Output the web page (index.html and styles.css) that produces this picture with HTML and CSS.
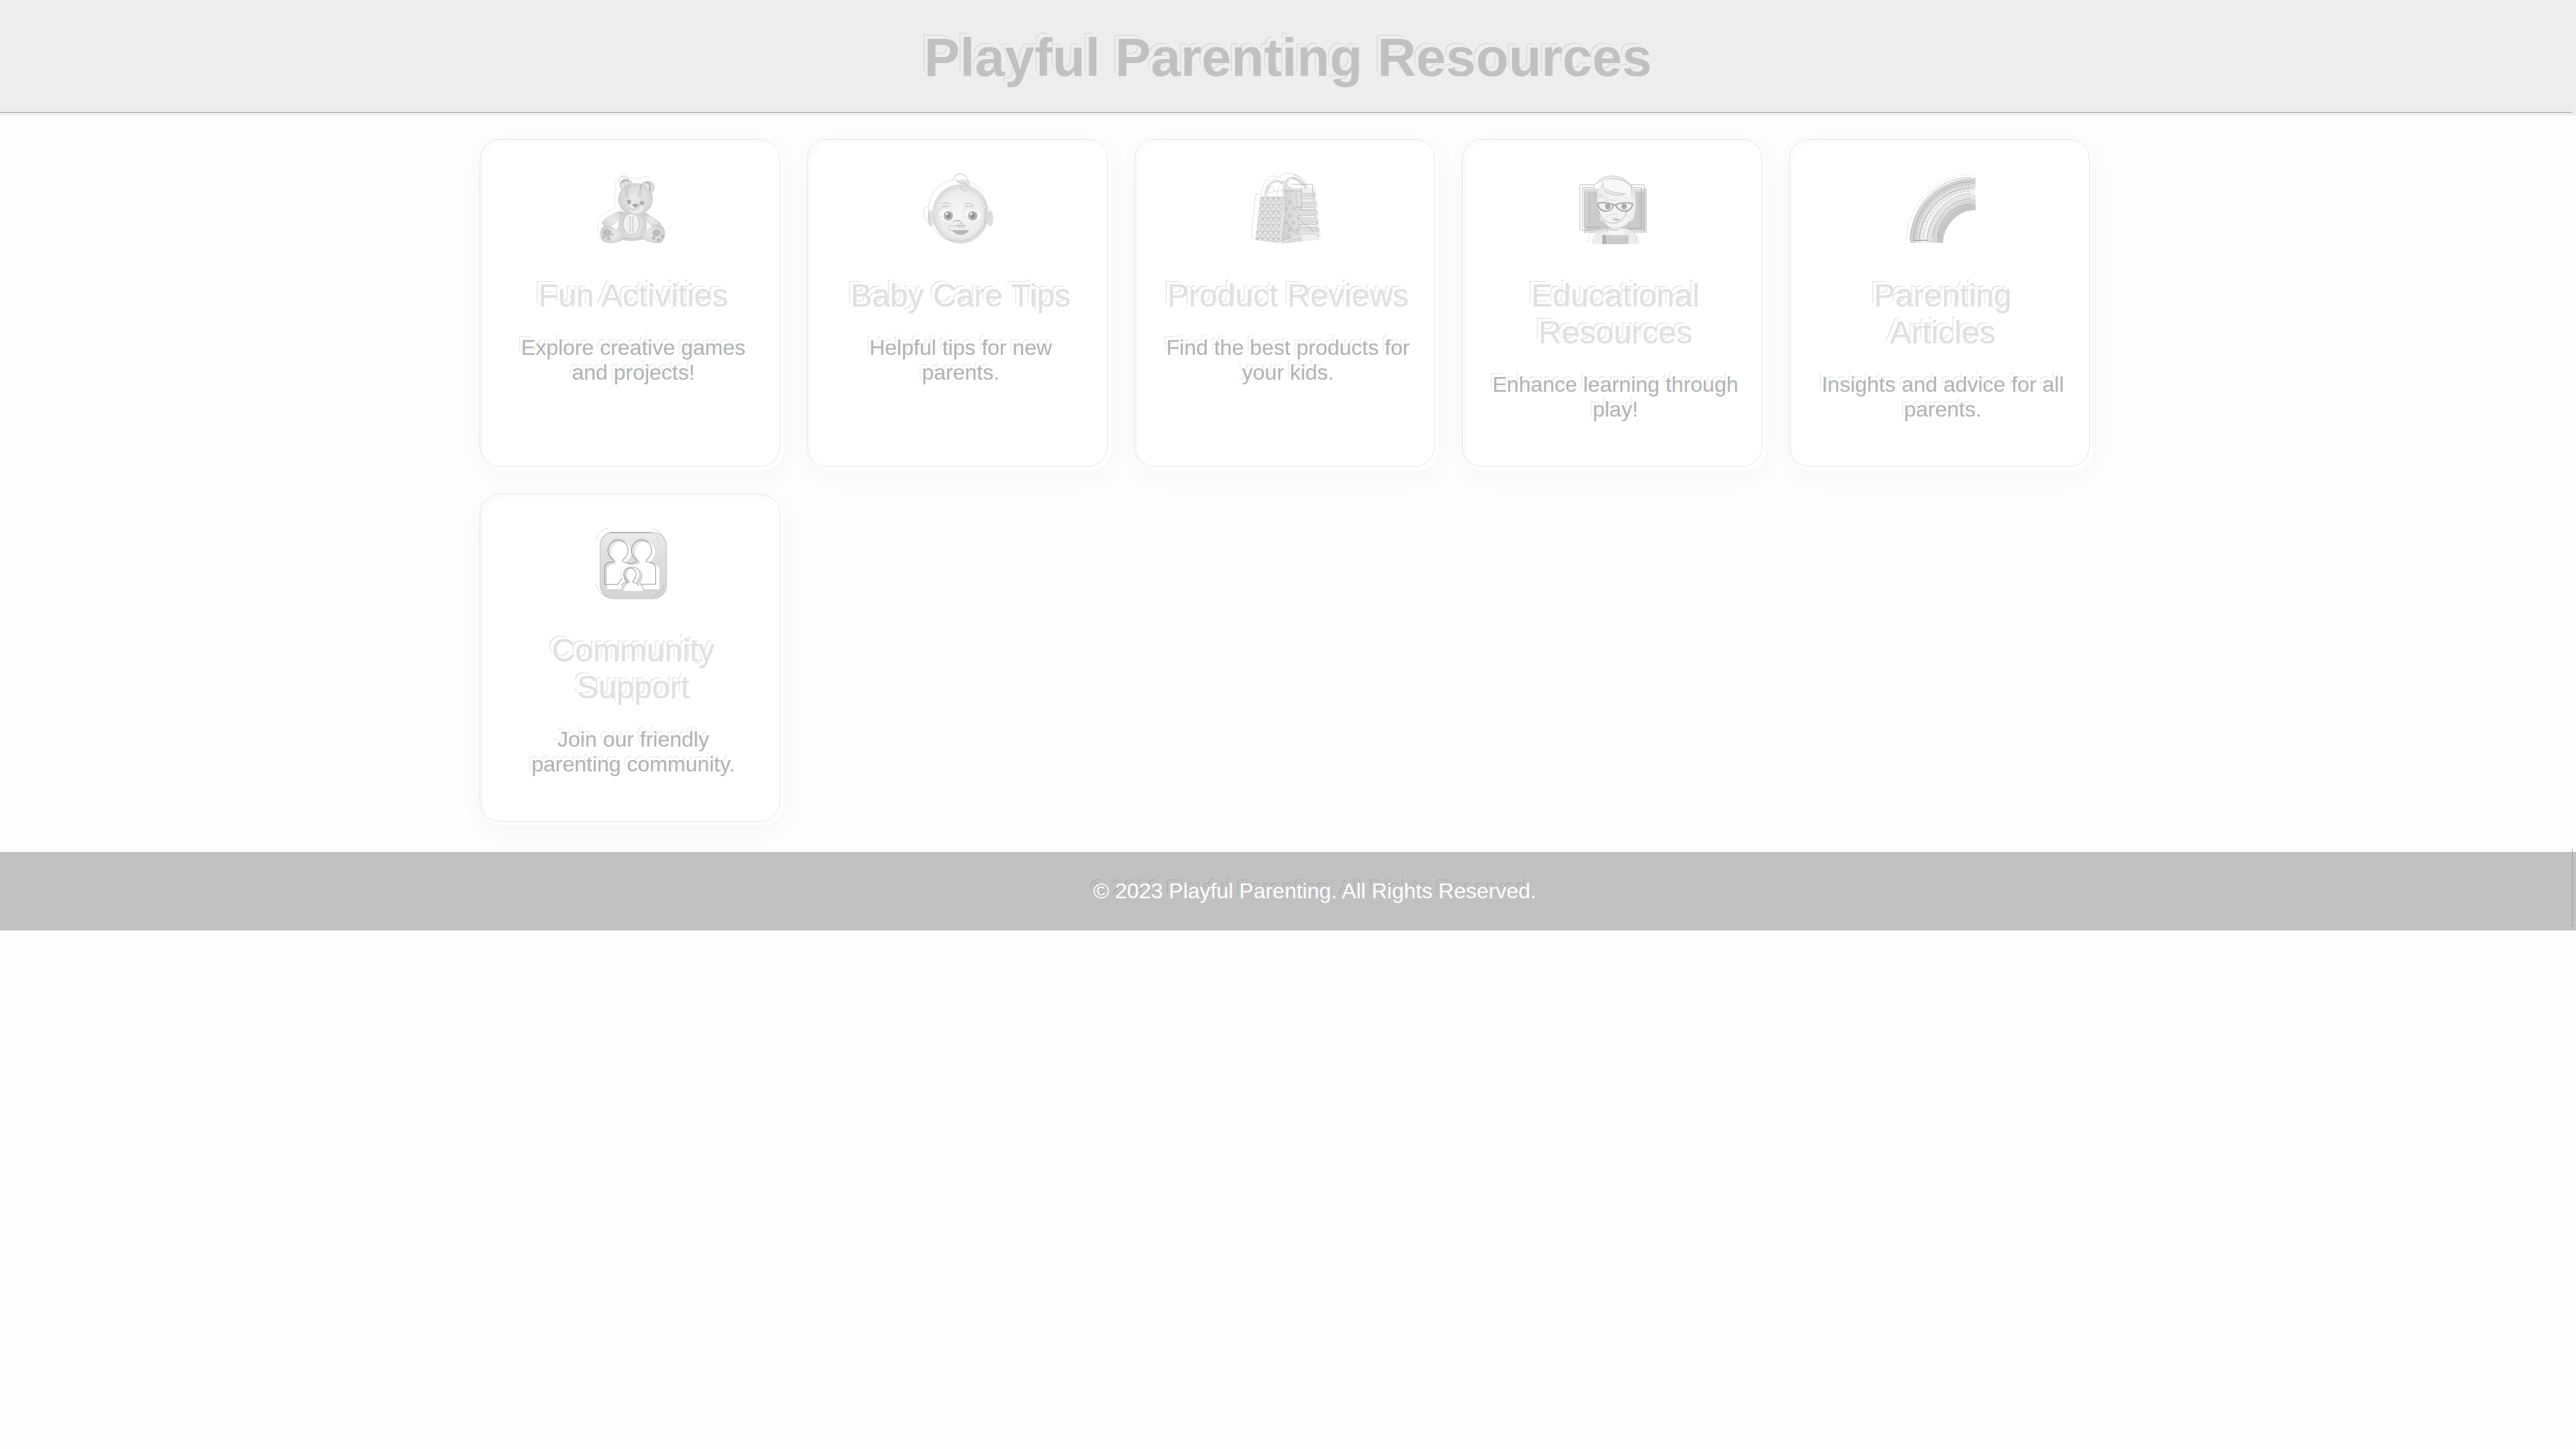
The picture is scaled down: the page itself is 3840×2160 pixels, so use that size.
FILE: index.html
```html
<!DOCTYPE html>
<html lang="en">
<head>
<meta charset="utf-8">
<meta name="viewport" content="width=device-width, initial-scale=1">
<title>Playful Parenting Resources</title>
<link rel="stylesheet" href="styles.css">
</head>
<body>
<header class="site-header"><h1>Playful Parenting Resources</h1></header>
<main class="cards">
  <article class="card">
    <svg class="icon" viewBox="564 180 336 351" preserveAspectRatio="none" aria-hidden="true">
      <defs>
        <radialGradient id="fur"><stop offset="0" stop-color="#ececec"/><stop offset=".7" stop-color="#dedede"/><stop offset="1" stop-color="#d0d0d0"/></radialGradient>
      </defs>
      <g fill="url(#fur)">
        <ellipse cx="699" cy="248" rx="29" ry="28"/><ellipse cx="798" cy="260" rx="30" ry="28"/>
        <path d="M682 360C640 368 605 390 590 410L610 440C640 425 672 402 692 385Z"/>
        <path d="M780 365C810 380 842 400 858 418L835 440C805 425 790 405 778 390Z"/>
        <path d="M680 365C665 400 660 440 668 480Q725 502 782 482C796 440 794 395 780 365Z"/>
        <path d="M594 432C580 450 580 480 600 495Q625 505 660 497L695 484Q690 440 655 440Q620 415 594 432Z"/>
        <path d="M866 432C880 450 876 485 856 498Q835 506 800 494L768 482Q766 442 800 440Q840 405 866 432Z"/>
        <ellipse cx="742" cy="310" rx="78" ry="69"/>
      </g>
      <ellipse cx="724" cy="417" rx="35" ry="46" fill="#f0f0f0"/>
      <ellipse cx="746" cy="347" rx="32" ry="26" fill="#ececec"/>
      <path d="M676 242Q690 222 712 234M784 236Q812 236 806 275" fill="none" stroke="#bbb" stroke-width="7"/>
      <g fill="#aaa"><circle cx="713" cy="322" r="9"/><circle cx="771" cy="327" r="9"/><path d="M726 336Q742 322 757 336L743 349Z"/></g>
      <g fill="#bcbcbc"><ellipse cx="614" cy="456" rx="19" ry="16"/><circle cx="600" cy="476" r="7"/><circle cx="622" cy="480" r="8"/><circle cx="638" cy="463" r="6"/><ellipse cx="836" cy="456" rx="19" ry="16"/><circle cx="863" cy="471" r="8"/><circle cx="845" cy="486" r="8"/><circle cx="823" cy="478" r="8"/></g>
      <g fill="none" stroke="#a6a6a6" stroke-width="2">
        <path stroke-dasharray="4 6" d="M652 262C646 225 664 201 688 202Q705 204 718 220Q742 218 757 225Q775 208 798 215Q822 230 812 250M658 262Q642 290 654 345Q590 372 572 400Q570 470 595 490M790 372Q830 400 868 430M594 418Q640 405 655 436Q675 436 684 460M762 458Q770 430 796 432Q820 405 862 440M590 440Q600 420 628 432Q642 462 612 478M800 440Q825 412 855 436Q875 462 850 488"/>
        <path d="M662 238Q668 210 692 212Q705 215 712 224M690 237Q704 262 698 303M708 238Q710 270 708 300M778 235Q756 268 757 306M766 245Q762 275 768 300M713 342Q728 360 748 354Q768 346 757 328M718 384V455M730 384V455"/>
        <ellipse cx="722" cy="418" rx="38" ry="46"/><circle cx="698" cy="304" r="13" stroke-dasharray="3 3"/><circle cx="756" cy="310" r="13" stroke-dasharray="3 3"/>
        <path d="M700 335Q692 355 720 354Q735 362 745 345M690 480H765" stroke-dasharray="6 4"/>
      </g>
    </svg>
    <h2>Fun Activities</h2>
    <p>Explore creative games and projects!</p>
  </article>
  <article class="card">
    <svg class="icon" viewBox="558 180 336 351" preserveAspectRatio="none" aria-hidden="true">
      <defs><radialGradient id="skin"><stop offset="0" stop-color="#f6f6f6"/><stop offset=".75" stop-color="#ededed"/><stop offset="1" stop-color="#d8d8d8"/></radialGradient></defs>
      <ellipse cx="594" cy="393" rx="16" ry="34" fill="#e2e2e2"/><ellipse cx="857" cy="394" rx="16" ry="34" fill="#e0e0e0"/>
      <ellipse cx="725" cy="374" rx="126" ry="128" fill="url(#skin)"/>
      <path d="M708 240Q725 215 762 232Q786 262 752 284Q728 280 724 262Q748 262 738 242Z" fill="#e2e2e2"/>
      <ellipse cx="668" cy="380" rx="34" ry="25" fill="#fcfcfc"/><ellipse cx="784" cy="380" rx="32" ry="25" fill="#fcfcfc"/>
      <g fill="#b5b5b5"><circle cx="671" cy="382" r="21"/><circle cx="780" cy="382" r="21"/></g>
      <g fill="#929292"><circle cx="671" cy="382" r="11"/><circle cx="780" cy="382" r="11"/></g>
      <circle cx="664" cy="374" r="5" fill="#fff"/><circle cx="773" cy="374" r="5" fill="#fff"/>
      <path d="M687 444H764Q752 466 726 465Q700 464 687 444Z" fill="#b9b9b9"/>
      <ellipse cx="727" cy="424" rx="20" ry="11" fill="#dedede"/>
      <g fill="none" stroke="#a2a2a2" stroke-width="2">
        <path stroke-dasharray="4 4" d="M691 228Q630 238 598 290Q584 318 583 346Q558 340 562 375Q568 408 588 416Q612 460 655 482Q735 505 788 470Q828 432 838 412Q862 398 858 352Q838 336 838 330Q825 258 762 233"/>
        <path d="M691 228Q700 202 725 200Q750 202 760 232M672 426H750M670 432Q674 445 690 448M750 438L744 450M584 352Q582 385 588 408M835 350Q840 390 832 416M700 228Q720 230 724 242Q748 236 762 262M640 330Q660 320 682 333M742 332Q760 322 784 335M642 340H680M746 340H784M692 412Q696 398 710 403Q728 398 730 418M700 405H724"/>
        <path stroke-dasharray="3 4" d="M620 380Q620 346 655 345Q690 350 692 378M622 385Q640 390 652 382M734 378Q736 344 765 346Q798 350 804 375M736 384Q750 390 760 380M724 264Q732 244 752 250Q766 254 757 270Q736 276 724 264"/>
      </g>
    </svg>
    <h2>Baby Care Tips</h2>
    <p>Helpful tips for new parents.</p>
  </article>
  <article class="card">
    <svg class="icon" viewBox="552 180 336 351" preserveAspectRatio="none" aria-hidden="true">
      <defs>
        <pattern id="dots" width="24" height="29" patternUnits="userSpaceOnUse"><circle cx="6" cy="6" r="4" fill="#f3f3f3"/><circle cx="18" cy="20" r="4" fill="#f3f3f3"/><path d="M7 13v8" stroke="#8e8e8e" stroke-width="2"/><path d="M17 13l4 5" stroke="#aaa" stroke-width="2"/></pattern>
        <linearGradient id="fold"><stop offset="0" stop-color="#cecece"/><stop offset="1" stop-color="#e4e4e4"/></linearGradient>
      </defs>
      <path d="M690 262H842L866 486L780 491Z" fill="#e6e6e6"/>
      <path d="M783 262H842L866 486H780Z" fill="#f2f2f2"/>
      <path d="M783 282h62l1 20h-63zM783 320h66l2 20h-68zM783 357h69l2 21h-71zM783 396h73l2 21h-75zM783 434h77l2 21h-79z" fill="#dcdcdc"/>
      <path d="M702 296Q704 215 740 219Q777 222 800 264" fill="none" stroke="#dcdcdc" stroke-width="10"/>
      <path d="M596 298H707L684 501L574 486Z" fill="#d8d8d8"/>
      <path d="M596 298H707L684 501L574 486Z" fill="url(#dots)"/>
      <path d="M707 268H781L786 494L684 501Z" fill="url(#fold)"/>
      <path d="M708 296L684 500L770 470" fill="none" stroke="#f4f4f4" stroke-width="4"/>
      <path d="M620 298Q630 230 675 233Q716 236 742 296" fill="none" stroke="#e0e0e0" stroke-width="10"/>
      <g fill="none" stroke="#9f9f9f" stroke-width="2">
        <path stroke-dasharray="5 5" d="M576 288H600Q612 210 654 210Q710 212 735 290M616 286Q626 226 660 224Q695 230 718 285M576 288L556 475L590 488M685 212Q700 196 720 199Q785 200 810 252M672 292Q676 238 712 226Q740 240 732 288M656 275H780M756 285L772 490M700 482H780M632 258H655V282H632Z"/>
        <path d="M748 204Q785 220 804 258M740 216Q765 225 782 252M735 246H830V280M710 298L706 340M780 262V360M758 345H840V356H768M765 380H844V392H768M768 420H848V408M770 432H850V444M784 460L855 462V475M784 308H832M832 280L836 320M760 390L835 450M720 420L765 465"/>
        <g><circle cx="730" cy="323" r="6"/><circle cx="711" cy="352" r="6"/><circle cx="747" cy="352" r="6"/><circle cx="728" cy="382" r="6"/><circle cx="711" cy="412" r="6"/><circle cx="745" cy="412" r="6"/><circle cx="729" cy="442" r="6"/><circle cx="761" cy="442" r="5"/><circle cx="723" cy="474" r="6"/></g>
      </g>
    </svg>
    <h2>Product Reviews</h2>
    <p>Find the best products for your kids.</p>
  </article>
  <article class="card">
    <svg class="icon" viewBox="576 180 336 351" preserveAspectRatio="none" aria-hidden="true">
      <path d="M603 265H885V456H603Z" fill="#dcdcdc"/><path d="M616 278H872V444H616Z" fill="#cbcbcb"/>
      <path d="M641 505Q640 450 695 440L745 432L800 440Q850 452 852 505Z" fill="#ededed"/>
      <path d="M662 330Q655 225 742 218Q832 220 834 320Q836 370 820 404H680Z" fill="#ededed"/>
      <path d="M668 310Q700 300 690 260Q740 292 798 290Q820 300 822 325Q825 432 744 438Q672 430 668 310Z" fill="#f2f2f2"/>
      <path d="M690 258Q672 230 742 228Q815 225 822 300Q760 305 690 258Z" fill="#f8f8f8"/>
      <path d="M708 442H784L775 464H718Z" fill="#f7f7f7"/>
      <path d="M686 466H806V505H686Z" fill="#ddd"/><path d="M702 476H800V505H702Z" fill="#c9c9c9"/><path d="M686 466H702V505H686Z" fill="#b4b4b4"/>
      <path d="M728 397Q748 391 768 398Q748 409 728 397Z" fill="#c4c4c4"/>
      <g fill="#aaa"><circle cx="710" cy="342" r="12"/><circle cx="783" cy="342" r="12"/></g>
      <g fill="none" stroke="#aaa" stroke-width="6"><path d="M664 328Q695 320 735 334Q730 362 702 362Q670 362 664 328ZM745 334Q780 320 822 330Q815 362 785 362Q754 360 745 334ZM735 336H746"/></g>
      <g fill="none" stroke="#9a9a9a" stroke-width="2">
        <path d="M652 248H592Q585 248 585 256V436Q585 444 594 444H640M810 248H866Q874 248 874 256V445M598 434V260H650M608 280V432H670M814 260H860V436H800"/>
        <path d="M652 246Q680 210 732 210Q785 212 812 248Q820 265 818 300M660 245Q690 218 735 219Q780 220 805 250M688 234Q682 256 700 268Q740 285 795 288M694 276Q740 296 780 292M670 360Q680 412 734 415Q782 410 796 360M704 444H760M690 470H796V490M690 470V500"/>
        <path stroke-dasharray="4 5" d="M650 250Q645 290 660 310Q680 275 712 308M665 292L705 308M690 322Q720 306 750 318M770 284L795 302M624 492Q625 440 690 430L730 440L780 430Q830 440 838 492M665 462Q680 446 712 446M708 386Q720 370 752 378Q750 394 722 390M655 370L672 395M795 380L820 400M630 290V420M850 285V420"/>
      </g>
    </svg>
    <h2>Educational Resources</h2>
    <p>Enhance learning through play!</p>
  </article>
  <article class="card">
    <svg class="icon" viewBox="570 180 336 351" preserveAspectRatio="none" aria-hidden="true">
      <g fill="none" stroke-width="25">
        <path d="M603 499C610 350 720 232 885 232" stroke="#d2d2d2"/>
        <path d="M627 499C634 365 735 256 885 256" stroke="#e0e0e0"/>
        <path d="M652 499C658 378 750 280 885 280" stroke="#f3f3f3"/>
        <path d="M677 499C682 392 765 303 885 303" stroke="#e4e4e4"/>
        <path d="M702 499C706 410 780 325 885 325" stroke="#d8d8d8"/>
        <path d="M726 499C730 420 795 345 885 345" stroke="#c8c8c8"/>
      </g>
      <g fill="none" stroke="#9c9c9c" stroke-width="2">
        <path stroke-dasharray="4 9" d="M573 488C580 340 700 202 872 203V270M720 488C724 420 780 345 868 344M730 488C738 425 790 355 868 350"/>
        <path d="M592 485C600 340 710 216 864 216M606 482C616 350 725 240 864 234M632 482C642 370 740 264 864 260M668 482C675 390 755 290 864 286M692 478C700 400 765 312 864 309"/>
        <path stroke-dasharray="12 5" d="M618 480C628 355 735 250 862 248M650 480C658 380 750 275 862 274"/>
        <path d="M604 488H672" stroke-width="4"/><path stroke-dasharray="5 3" stroke-width="4" d="M716 475C720 410 775 335 864 332"/>
      </g>
    </svg>
    <h2>Parenting Articles</h2>
    <p>Insights and advice for all parents.</p>
  </article>
  <article class="card">
    <svg class="icon" viewBox="564 177 336 351" preserveAspectRatio="none" aria-hidden="true">
      <defs><linearGradient id="tile" x2="0" y2="1"><stop offset="0" stop-color="#ececec"/><stop offset=".4" stop-color="#dedede"/><stop offset="1" stop-color="#d4d4d4"/></linearGradient></defs>
      <rect x="584" y="214" width="296" height="286" rx="58" fill="url(#tile)" stroke="#cfcfcf" stroke-width="5"/>
      <g fill="#fff">
        <path d="M615 459V375Q617 352 645 352Q663 346 650 335A45 45 0 1 1 705 335Q692 346 710 352L732 356L752 352Q770 346 757 335A45 45 0 1 1 812 335Q798 346 818 352Q847 354 849 378V459Z"/>
      </g>
      <path d="M674 458Q690 438 698 430A42 42 0 1 1 764 430Q775 440 782 458Z" fill="#d6d6d6"/>
      <path d="M690 467Q690 438 717 432Q722 427 710 416A28 30 0 1 1 752 416Q740 427 748 432Q774 438 774 467Z" fill="#fff"/>
      <g fill="none" stroke="#949494" stroke-width="3">
        <path d="M604 438V365Q608 340 638 342Q652 338 640 330A45 45 0 1 1 688 330Q676 342 700 344L716 350L740 342Q756 338 745 330A45 45 0 1 1 793 330Q782 342 806 343Q832 346 832 370V438H768M604 439H662L682 410"/>
        <path d="M680 445Q684 430 702 430Q710 426 698 417A28 29 0 1 1 736 417Q726 426 734 431Q752 432 756 445M626 215H808"/>
        <path stroke-width="2" stroke-dasharray="4 4" d="M676 405A45 45 0 0 1 760 385M565 246Q575 205 618 196M816 196Q858 205 870 246M565 438Q575 480 618 490M816 490Q858 480 870 438M588 245Q600 220 626 215M808 215Q846 225 848 262M632 256Q660 225 698 254M738 256Q770 225 802 254"/>
      </g>
    </svg>
    <h2>Community Support</h2>
    <p>Join our friendly parenting community.</p>
  </article>
</main>
<footer class="site-footer"><p>© 2023 Playful Parenting. All Rights Reserved.</p></footer>
</body>
</html>
```
FILE: styles.css
```css
* {
  box-sizing: border-box;
}

body {
  margin: 0;
  background: #fdfdfd;
  color: #b2b2b2;
  font-family: "Liberation Sans", Arial, sans-serif;
  font-size: 32px;
  line-height: 37px;
}

h1,
h2,
p {
  margin: 0;
}

.site-header {
  position: relative;
  padding: 40px;
  background: #eee;
  text-align: center;
}

/* thin rule just inside the header's lower edge */
.site-header::after {
  content: "";
  position: absolute;
  left: 0;
  right: 6px;
  bottom: 4px;
  height: 1px;
  background: #999;
}

.site-header h1 {
  color: #c1c1c1;
  font-size: 80px;
  line-height: 92px;
  text-shadow: -5px -5px 0 #eee, -6px -6px 0 #d2d2d2;
}

.cards {
  display: grid;
  grid-template-columns: repeat(5, 1fr);
  gap: 40px;
  max-width: 2480px;
  margin: 0 auto;
  padding: 40px;
}

.card {
  position: relative;
  padding: 40px;
  border-radius: 30px;
  background: #fff;
  box-shadow: 0 8px 40px rgba(0, 0, 0, 0.03);
  text-align: center;
}

/* hairline frame set up and to the left of the card */
.card::before {
  content: "";
  position: absolute;
  inset: -5px 5px 5px -5px;
  border: 1px solid #e6e6e6;
  border-radius: 30px;
}

.icon {
  display: block;
  width: 112px;
  height: 121px;
  margin: 0 auto 40px;
}

.card h2 {
  margin-bottom: 32px;
  color: #e0e0e0;
  font-size: 48px;
  font-weight: 400;
  line-height: 55px;
  text-shadow: -5px -4px 0 #fff, -6px -5px 0 #dadada;
}

.card p {
  margin-bottom: 32px;
  text-shadow: -4px -5px 0 #fff, -5px -6px 0 #e4e4e4;
}

.site-footer {
  position: relative;
  padding: 40px 0 40px 80px;
  background: #c1c1c1;
  color: #fff;
  text-align: center;
  text-shadow: -4px -5px 0 #c1c1c1, -5px -6px 0 #a8a8a8;
}

.site-footer::after {
  content: "";
  position: absolute;
  top: -5px;
  right: 5px;
  bottom: 5px;
  width: 1px;
  background: #a0a0a0;
}
```
